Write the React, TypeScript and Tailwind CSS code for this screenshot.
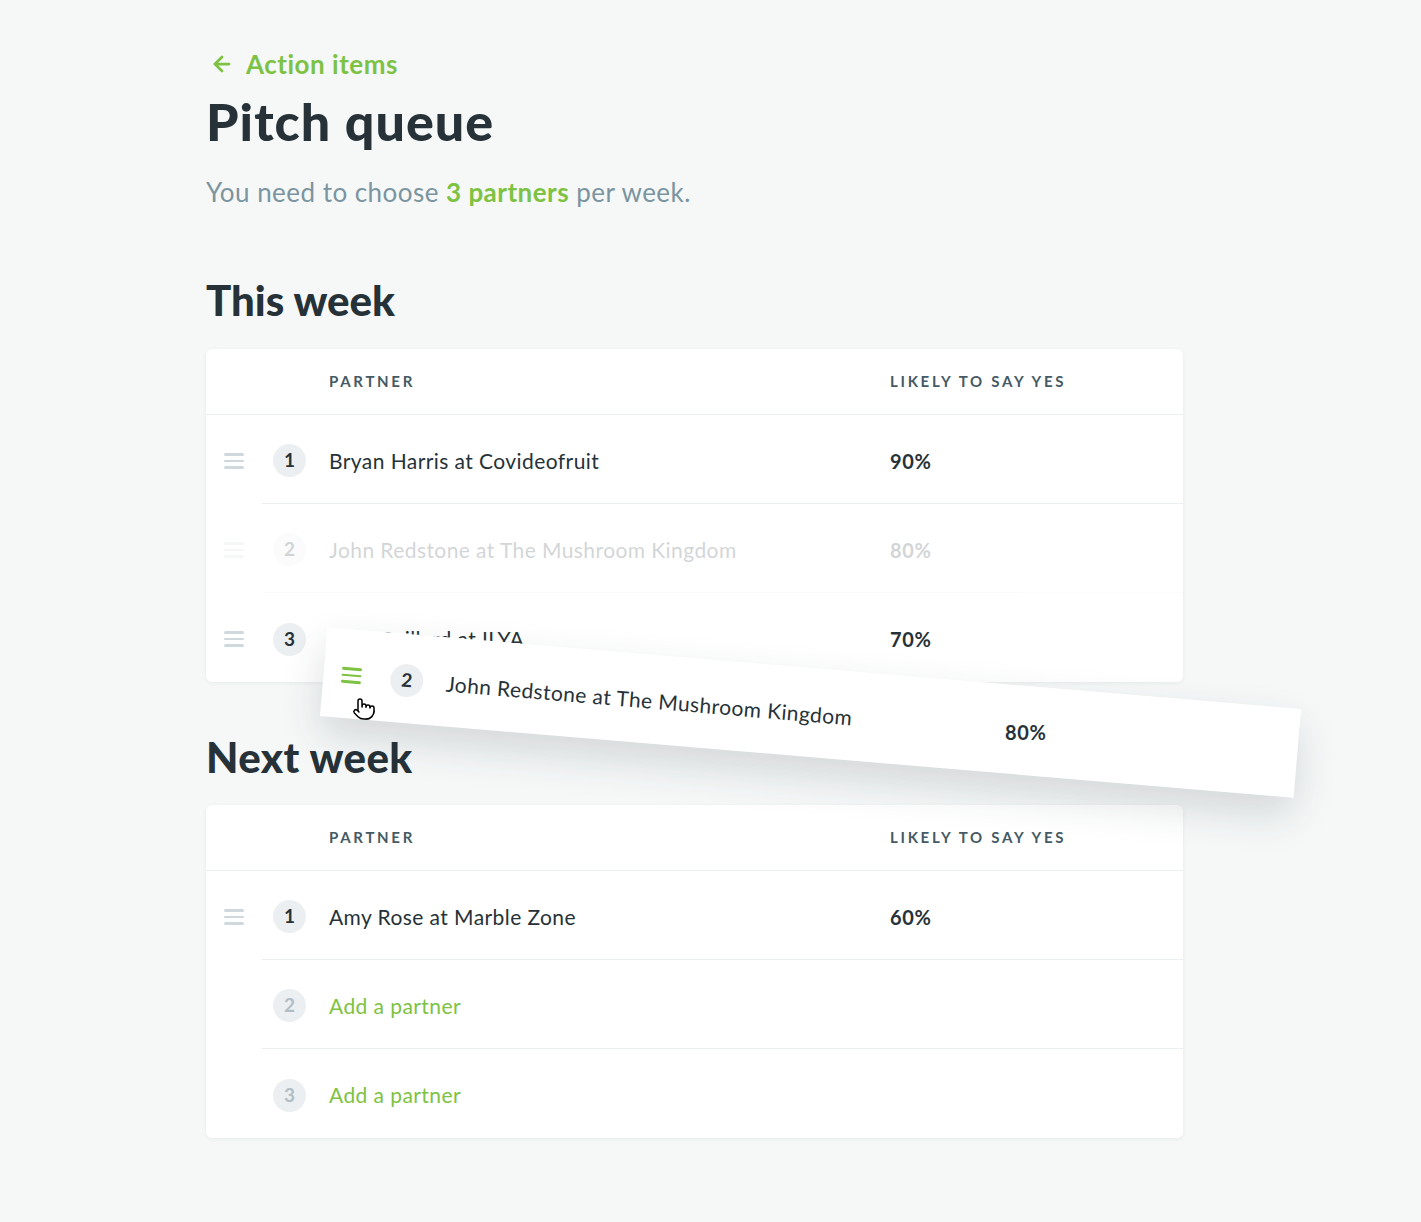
import { ArrowLeft, Pointer } from 'lucide-react';

type Partner = { name: string; chance?: string };

const Handle = ({ color = 'bg-[#cfd8dc]' }: { color?: string }) => (
    <div className="flex flex-col gap-[4px] w-5">
        <span className={`h-[2.5px] rounded-full ${color}`} />
        <span className={`h-[2.5px] rounded-full ${color}`} />
        <span className={`h-[2.5px] rounded-full ${color}`} />
    </div>
);

const Badge = ({ n, muted }: { n: number; muted?: boolean }) => (
    <div
        className={`w-[33px] h-[33px] rounded-full bg-[#eceff1] flex items-center justify-center text-[19px] font-bold ${
            muted ? 'text-[#b0bec5]' : 'text-[#263238]'
        }`}
    >
        {n}
    </div>
);

const Row = ({
    index,
    partner,
    last,
    ghost,
    dragging,
}: {
    index: number;
    partner?: Partner;
    last?: boolean;
    ghost?: boolean;
    dragging?: boolean;
}) => (
    <div className={`flex h-[89px] items-stretch ${ghost ? 'opacity-20' : ''}`}>
        <div className="w-[56px] flex items-center pl-[18px] pt-[3px]">
            {partner && <Handle color={dragging ? 'bg-[#7dc242]' : 'bg-[#cfd8dc]'} />}
        </div>
        <div
            className={`flex-1 flex items-center pt-[3px] ${
                last ? '' : 'border-b border-[#eceff1]'
            }`}
        >
            <div className="w-[67px] pl-[11px]">
                <Badge n={index} muted={!partner} />
            </div>
            <div className="w-[561px] text-[21px] tracking-[0.02em]">
                {partner ? (
                    <span className="text-[#263238]">{partner.name}</span>
                ) : (
                    <span className="text-[#7dc242]">Add a partner</span>
                )}
            </div>
            {partner && (
                <div
                    className={`text-[20px] font-bold tracking-[0.03em] text-[#263238] ${
                        dragging ? '-rotate-[4.8deg]' : ''
                    }`}
                >
                    {partner.chance}
                </div>
            )}
        </div>
    </div>
);

const Table = ({ rows }: { rows: (Partner | undefined)[] }) => (
    <div className="bg-white rounded-md shadow-[0_1px_4px_rgba(38,50,56,0.07)]">
        <div className="flex h-[66px] items-center border-b border-[#eceff1] text-[15px] font-bold tracking-[0.18em] text-[#455a64]">
            <div className="w-[123px]" />
            <div className="w-[561px]">PARTNER</div>
            <div>LIKELY TO SAY YES</div>
        </div>
        {rows.map((p, i) => (
            <Row
                key={i}
                index={i + 1}
                partner={p}
                last={i === rows.length - 1}
                ghost={i === 1 && p?.name.startsWith('John')}
            />
        ))}
    </div>
);

export default function App() {
    const thisWeek: Partner[] = [
        { name: 'Bryan Harris at Covideofruit', chance: '90%' },
        { name: 'John Redstone at The Mushroom Kingdom', chance: '80%' },
        { name: 'Jean Gaillard at ILYA', chance: '70%' },
    ];
    const nextWeek: (Partner | undefined)[] = [
        { name: 'Amy Rose at Marble Zone', chance: '60%' },
        undefined,
        undefined,
    ];

    return (
        <div
            className="relative min-h-[1222px] bg-[#f6f8f8] pt-[46px] pl-[206px] overflow-hidden"
            style={{ fontFamily: 'Lato, "Open Sans", sans-serif' }}
        >
            <div className="w-[977px]">
                {/* Back link */}
                <a href="#" className="flex items-center gap-[12px] h-9 pl-[4px] text-[26px] font-bold tracking-[0.02em] text-[#7dc242]">
                    <ArrowLeft size={24} strokeWidth={2.75} />
                    <span className="leading-9">Action items</span>
                </a>

                <h1 className="mt-[9px] text-[52px] leading-[60px] font-black tracking-[0.02em] text-[#263238]">Pitch queue</h1>
                <p className="mt-[25px] text-[26px] leading-8 tracking-[0.018em] text-[#7b949f]">
                    You need to choose <span className="font-bold text-[#7dc242]">3 partners</span> per week.
                </p>

                <h2 className="mt-[68px] text-[42px] leading-[48px] font-black text-[#263238]">This week</h2>
                <div className="mt-[25px]">
                    <Table rows={thisWeek} />
                </div>

                <h2 className="mt-[51px] text-[42px] leading-[48px] font-black tracking-[0.01em] text-[#263238]">Next week</h2>
                <div className="mt-[24px]">
                    <Table rows={nextWeek} />
                </div>
            </div>

            {/* Dragged row */}
            <div className="absolute left-[322px] top-[668px] w-[977px] bg-white rotate-[4.8deg] shadow-[0_18px_40px_rgba(38,50,56,0.16)]">
                <Row index={2} partner={thisWeek[1]} last dragging />
            </div>

            {/* Cursor */}
            <div className="absolute left-[352px] top-[697px] text-black">
                <Pointer size={24} fill="white" strokeWidth={1.5} />
            </div>
        </div>
    );
}
